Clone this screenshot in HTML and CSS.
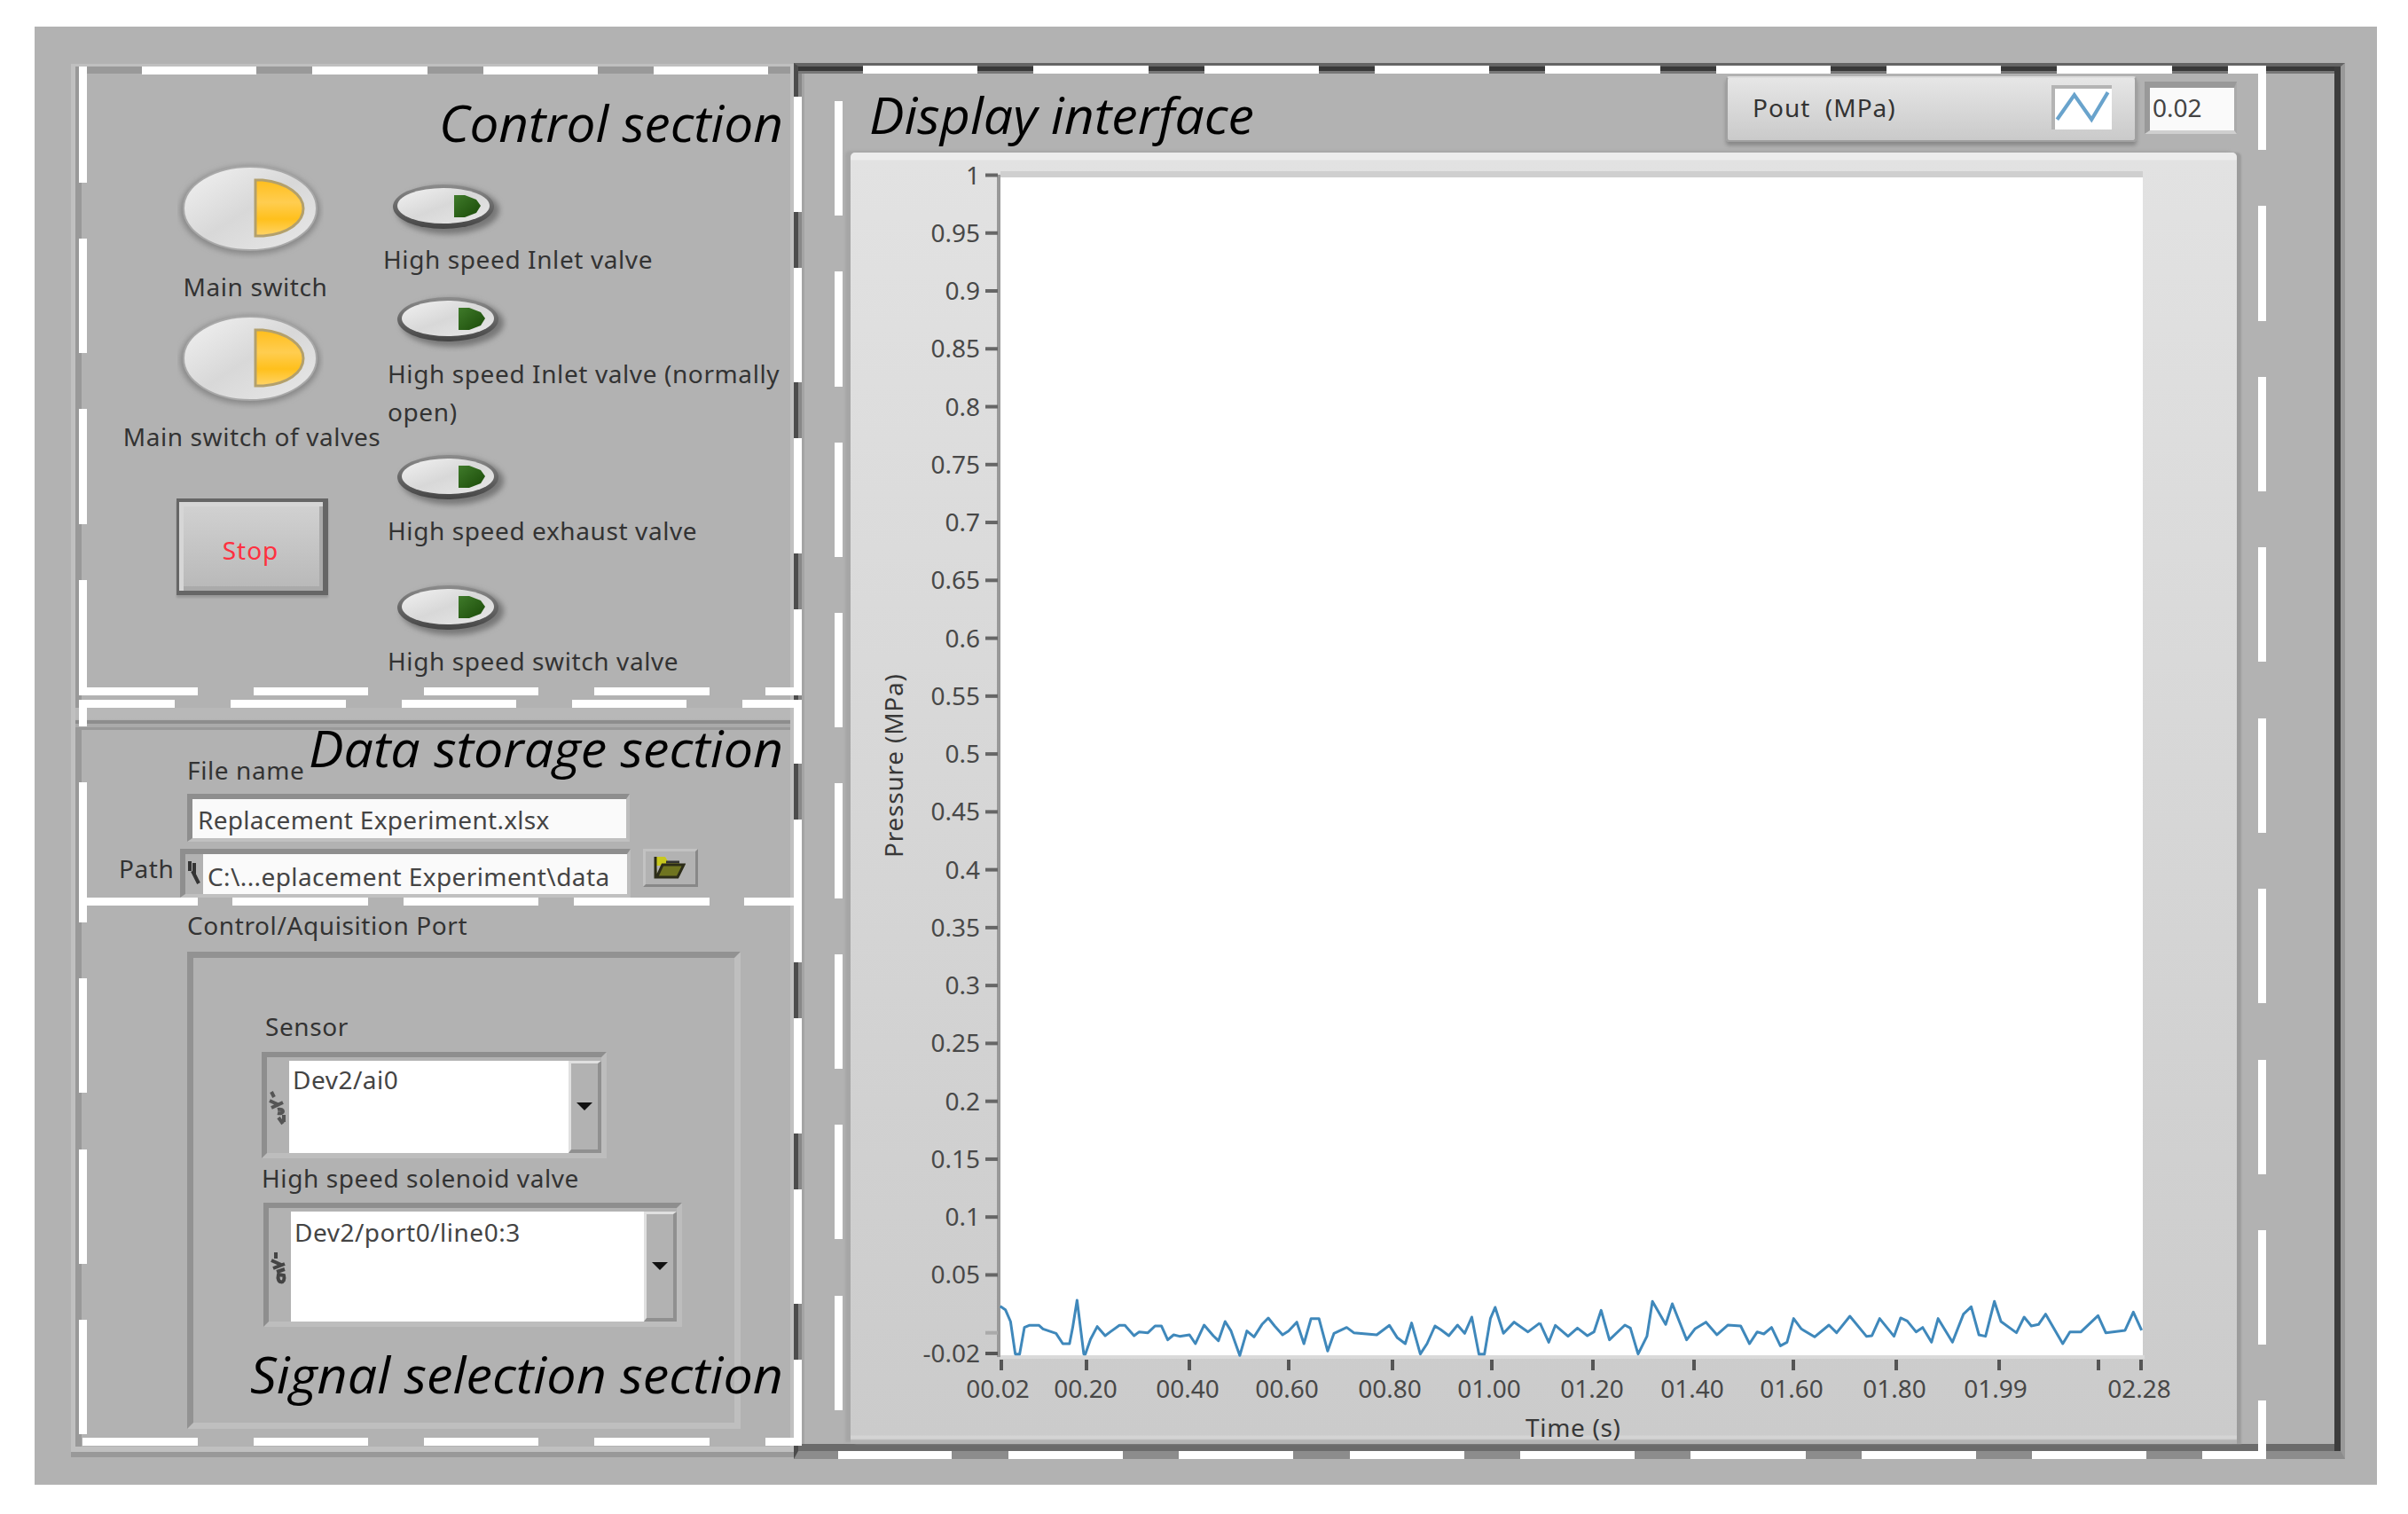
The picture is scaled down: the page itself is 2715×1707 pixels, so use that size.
FILE: index.html
```html
<!DOCTYPE html>
<html lang="en">
<head>
  <meta charset="UTF-8" />
  <title>Valve Control Panel</title>
  <link rel="stylesheet" href="styles.css">
</head>
<body>

  <svg class="defs" width="0" height="0">
    <defs>
      <linearGradient id="cap" x1="0" y1="0" x2="1" y2="1">
        <stop offset="0" stop-color="#f2f2f2"/>
        <stop offset=".5" stop-color="#d8d8d8"/>
        <stop offset="1" stop-color="#e8e8e8"/>
      </linearGradient>
      <linearGradient id="amber" x1="0" y1="0" x2="0" y2="1">
        <stop offset="0" stop-color="#ffbe1c"/>
        <stop offset=".4" stop-color="#ffcd50"/>
        <stop offset=".7" stop-color="#ffc01c"/>
        <stop offset="1" stop-color="#ffd468"/>
      </linearGradient>
      <linearGradient id="rim" x1="0" y1="0" x2="0" y2="1">
        <stop offset="0" stop-color="#8c8c8c"/>
        <stop offset="1" stop-color="#444"/>
      </linearGradient>
      <linearGradient id="green" x1="0" y1="0" x2="1" y2="1">
        <stop offset="0" stop-color="#3f7a2a"/>
        <stop offset="1" stop-color="#1a4a08"/>
      </linearGradient>
      <filter id="soft" x="-20%" y="-30%" width="140%" height="170%"><feGaussianBlur stdDeviation="3"/></filter>
    </defs>
    <symbol id="main-switch" viewBox="0 0 165 110">
      <ellipse cx="82" cy="55" rx="79" ry="50" fill="#888" filter="url(#soft)"/>
      <ellipse cx="82" cy="53" rx="75" ry="47" fill="url(#cap)" stroke="#a8a8a8" stroke-width="2"/>
      <path d="M88 21 H96 C124 24 142 38 142 53 C142 69 124 82 97 84 H88 Z" fill="url(#amber)" stroke="#b3a06c" stroke-width="3"/>
    </symbol>
    <symbol id="toggle" viewBox="0 0 130 66">
      <ellipse cx="66" cy="33" rx="58" ry="27" fill="#777" filter="url(#soft)"/>
      <ellipse cx="61" cy="29" rx="57" ry="25" fill="url(#rim)"/>
      <ellipse cx="61" cy="28" rx="52" ry="20" fill="url(#cap)"/>
      <path d="M73 16 H85 L98 21 L103 28 L98 36 L85 41 H73 Z" fill="url(#green)"/>
    </symbol>
  </svg>

  <div class="panel">
    <div class="left">

      <div class="control">
        <div class="switches">
          <svg class="main-switch"><use href="#main-switch"/></svg>
          <div class="label">Main switch</div>
          <svg class="main-switch second"><use href="#main-switch"/></svg>
          <div class="label of-valves">Main switch of valves</div>
          <button class="stop">Stop</button>
        </div>
        <div class="valves">
          <div class="valve first"><svg class="toggle"><use href="#toggle"/></svg><div class="label">High speed Inlet valve</div></div>
          <div class="valve"><svg class="toggle"><use href="#toggle"/></svg><div class="label two-lines">High speed Inlet valve (normally<br>open)</div></div>
          <div class="valve"><svg class="toggle"><use href="#toggle"/></svg><div class="label">High speed exhaust valve</div></div>
          <div class="valve"><svg class="toggle"><use href="#toggle"/></svg><div class="label">High speed switch valve</div></div>
        </div>
      </div>

      <div class="storage">
        <div class="label">File name</div>
        <div class="field file">Replacement Experiment.xlsx</div>
        <div class="path-row">
          <div class="label">Path</div>
          <div class="field path">
            <svg class="path-icon" viewBox="0 0 16 28"><path d="M3 1 V12 M8 3 V16 M6 12 L13 26" stroke="#333" stroke-width="4" fill="none"/></svg>
            <span>C:\...eplacement Experiment\data</span>
          </div>
          <div class="browse">
            <svg viewBox="0 0 36 28" width="36" height="28">
              <path d="M2 2 H13 L16 7 H29 V12 H2 Z" fill="#c8c81e"/>
              <path d="M2 2 V25 H27 L34 11 H10 L4 24" fill="#6f7420" stroke="#2c2c18" stroke-width="3"/>
              <path d="M14 8 H29" stroke="#333" stroke-width="3"/>
            </svg>
          </div>
        </div>
      </div>

      <div class="signal">
        <div class="label">Control/Aquisition Port</div>
        <div class="port">
          <div class="label sensor-label">Sensor</div>
          <div class="combo sensor">
            <svg class="io" viewBox="0 0 22 40"><path d="M5 2 L8 8 M3 12 L14 17 M5 20 L18 14 M12 22 C20 20 20 28 12 26 M13 31 L18 38 M19 28 V36" stroke="#555" stroke-width="4" fill="none"/></svg>
            <div class="value">Dev2/ai0</div>
            <div class="drop"><i></i></div>
          </div>
          <div class="label">High speed solenoid valve</div>
          <div class="combo solenoid">
            <svg class="io" viewBox="0 0 22 40"><path d="M8 2 V9 M3 11 L14 16 M5 20 L18 15 M9 24 L18 21 M11 27 C8 38 20 38 17 28 Z" stroke="#444" stroke-width="4" fill="none"/></svg>
            <div class="value">Dev2/port0/line0:3</div>
            <div class="drop"><i></i></div>
          </div>
        </div>
      </div>
    </div>

    <div class="display">
      <div class="legend-row">
        <div class="legend">
          <span>Pout&nbsp; (MPa)</span>
          <svg class="plot-icon" viewBox="0 0 60 45"><path d="M1 34 L20 7 L39 34 L57 4" fill="none" stroke="#69a3cc" stroke-width="4"/></svg>
        </div>
        <div class="readout">0.02</div>
      </div>
      <div class="graph">
        <svg id="chart" viewBox="959 172 1563 1456" width="1563" height="1456">
          <rect x="1128" y="193" width="1288" height="8" fill="#cfcfcf"/>
          <rect x="1128" y="200" width="1288" height="1328" fill="#fff"/>
          <rect x="1128" y="1528" width="1290" height="4" fill="#dadada"/>
          <rect x="1124" y="197" width="4" height="1333" fill="#999"/>
          <g id="ticks"></g>
          <g fill="none" stroke="#3f88bb" stroke-width="3" stroke-linejoin="round">
            <polyline vector-effect="non-scaling-stroke" transform="translate(1080 1380) scale(.4464 .3333)" points="107,278 120,290 133,330 145,440 156,440 168,350 180,343 205,343 215,355 248,370 265,405 282,405 290,350 301,258 318,440 322,440 335,390 352,347 372,378 385,365 408,343 422,343 445,378 458,365 480,368 498,345 514,345 530,392 545,375 560,380 585,375 600,405 622,342 645,378 658,395 675,330 690,362 712,445 730,362 748,382 768,340 784,318 800,345 820,375 835,362 856,332 874,405 892,320 912,320 934,430 950,370 982,350 1000,368 1058,375 1090,343 1110,385 1130,405 1146,335 1168,440 1185,405 1205,345 1220,358 1240,378 1262,342 1280,370 1298,315 1316,440 1330,440 1345,320 1357,282 1378,370 1405,332 1440,365 1470,335"/>
            <polyline vector-effect="non-scaling-stroke" transform="translate(1740 1380) scale(.6218 .3333)" points="-6,335 10,400 22,343 45,380 62,352 80,378 92,365 105,292 120,392 148,342 158,352 172,440 188,380 198,262 222,340 234,270 260,392 275,355 295,332 315,375 335,342 358,345 374,405 388,365 400,372 414,350 430,412 442,400 454,320 468,355 492,382 518,342 532,368 556,312 586,380 596,378 610,320 636,380 648,318 660,328 676,365 688,350 704,400 716,320 742,400 762,305 776,280 790,375 802,380 818,262 830,330 858,368 872,315 885,345 898,340 911,305 942,405 955,365 975,365 1006,310 1020,368 1055,360 1070,298 1085,360"/>
          </g>
          <text class="axis-title" x="1720" y="1620" textLength="107">Time (s)</text>
          <text class="axis-title" transform="translate(1018 967) rotate(-90)" textLength="207">Pressure (MPa)</text>
        </svg>
      </div>
    </div>
  </div>

  <!-- section outlines and captions over the panel -->
  <svg class="outlines" viewBox="0 0 2715 1707" width="2715" height="1707">
    <g fill="none" stroke="#fff" stroke-width="9">
      <path d="M160 79.5H289M352 79.5H482M545 79.5H674M737 79.5H866"/>
      <path d="M89 779.5H223M286 779.5H415M478 779.5H607M670 779.5H800M863 779.5H904"/>
      <path d="M93.5 75V206M93.5 269V398M93.5 461V591M93.5 654V784"/>
      <path d="M899.5 109V239M899.5 302V431M899.5 494V624M899.5 687V784"/>
      <path d="M89 793.5H197M260 793.5H390M453 793.5H582M645 793.5H774M837 793.5H904"/>
      <path d="M93.5 789V819M93.5 882V1040M93.5 1103V1232M93.5 1296V1425M93.5 1488V1617"/>
      <path d="M899.5 789V861M899.5 924V1085M899.5 1148V1278M899.5 1341V1470M899.5 1533V1630"/>
      <path d="M98 1016.5H223M262 1016.5H415M455 1016.5H607M647 1016.5H800M839 1016.5H895"/>
      <path d="M93 1625.5H223M286 1625.5H415M478 1625.5H607M670 1625.5H800M863 1625.5H904"/>
      <path d="M973 78.5H1102M1165 78.5H1295M1358 78.5H1487M1550 78.5H1679M1742 78.5H1872M1935 78.5H2064M2127 78.5H2256M2319 78.5H2449M2512 78.5H2555"/>
      <path d="M945 1640.5H1073M1137 1640.5H1266M1329 1640.5H1458M1522 1640.5H1651M1714 1640.5H1843M1906 1640.5H2036M2099 1640.5H2228M2291 1640.5H2420M2483 1640.5H2555"/>
      <path d="M945.5 114V243M945.5 306V436M945.5 499V628M945.5 691V820M945.5 883V1013M945.5 1076V1205M945.5 1268V1397M945.5 1461V1590"/>
      <path d="M2550.5 74V169M2550.5 232V362M2550.5 425V554M2550.5 617V746M2550.5 810V939M2550.5 1002V1131M2550.5 1195V1324M2550.5 1387V1516M2550.5 1579V1645"/>
    </g>
    <g class="caption">
      <text x="495" y="160" textLength="388" lengthAdjust="spacingAndGlyphs">Control section</text>
      <text x="348" y="865" textLength="535" lengthAdjust="spacingAndGlyphs">Data storage section</text>
      <text x="282" y="1571" textLength="601" lengthAdjust="spacingAndGlyphs">Signal selection section</text>
      <text x="980" y="151" textLength="434" lengthAdjust="spacingAndGlyphs">Display interface</text>
    </g>
  </svg>

  <script>
    const ticks = document.getElementById("ticks");
    let out = "";

    // pressure axis, 0.05 MPa per step
    for (let i = 0; i <= 20; i++) {
      const y = 197.5 + i * 65.26;
      out += `<rect x="1111" y="${y - 2}" width="14" height="4" fill="${i === 20 ? "#aaa" : "#666"}"/>`;
      if (i < 20) {
        const label = +(1 - i * 0.05).toFixed(2);
        out += `<text x="1105" y="${y + 10}" text-anchor="end">${label}</text>`;
      }
    }
    out += `<rect x="1111" y="1524" width="14" height="4" fill="#555"/>`;
    out += `<text x="1105" y="1536" text-anchor="end">-0.02</text>`;

    // time axis: position, label
    const times = [
      [1129, "00.02", 1125], [1225, "00.20", 1224], [1341, "00.40", 1339], [1453, "00.60", 1451],
      [1570, "00.80", 1567], [1682, "01.00", 1679], [1796, "01.20", 1795], [1910, "01.40", 1908],
      [2022, "01.60", 2020], [2138, "01.80", 2136], [2254, "01.99", 2250], [2366, "", 2366], [2414, "02.28", 2412]
    ];
    for (const [x, label, cx] of times) {
      out += `<rect x="${x - 2}" y="1533" width="4" height="12" fill="#555"/>`;
      out += `<text x="${cx}" y="1576" text-anchor="middle">${label}</text>`;
    }
    ticks.innerHTML = out;
  </script>

</body>
</html>
```

FILE: styles.css
```css
* {
  box-sizing: border-box;
}
body {
  position: relative;
  margin: 0;
  height: 1707px;
  padding: 30px 35px 0 39px;
  overflow: hidden;
  background: #fff;
  font-family: "Noto Sans", "Open Sans", sans-serif;
  font-size: 28px;
  line-height: 32px;
  color: #333;
}
.defs {
  position: absolute;
}
.panel {
  display: flex;
  height: 1644px;
  padding: 41px 36px 0 41px;
  background: #b2b2b2;
}
.label {
  white-space: nowrap;
  letter-spacing: 0.6px;
}

/* left column */
.left {
  width: 815px;
  height: 1565px;
  margin-top: 1px;
  border: solid #c0c0c0;
  border-width: 3px 4px 6px 5px;
  box-shadow: inset 7px 8px 0 #999, 0 6px 0 #999;
}
.control {
  display: flex;
  height: 723px;
}
.switches {
  display: flex;
  flex-direction: column;
  align-items: center;
  width: 290px;
  margin-left: 54px;
  padding-top: 107px;
}
.main-switch {
  width: 165px;
  height: 110px;
  margin-left: -4px;
}
.main-switch + .label {
  margin-top: 15px;
  margin-left: 8px;
}
.main-switch.second {
  margin-top: 12px;
}
.main-switch + .label.of-valves {
  margin-left: 0;
}
.stop {
  width: 171px;
  height: 109px;
  margin-top: 54px;
  padding-top: 8px;
  border: solid #666;
  border-width: 4px 6px 5px 3px;
  box-shadow: inset 5px 5px 0 #d6d6d6, inset -4px -5px 0 #aaa, 0 3px 2px #999;
  background: linear-gradient(#d2d2d2, #b8b8b8);
  color: #ff3040;
  font: inherit;
  letter-spacing: 1px;
}
.valves {
  display: grid;
  grid-template-rows: 127px 178px 147px auto;
  margin-left: 8px;
  padding-top: 129px;
}
.valve.first {
  margin-left: -5px;
}
.toggle {
  display: block;
  width: 130px;
  height: 66px;
  margin-left: 7px;
}
.valve .label {
  margin-top: 7px;
}
.valve.first .label {
  margin-top: 6px;
}
.valve .two-lines {
  margin-top: 3px;
  line-height: 43px;
}

/* file name and path */
.storage {
  height: 223px;
  padding-top: 28px;
  padding-left: 126px;
  background: linear-gradient(#b8b8b8 0 12px, #b2b2b2 14px, #8d8d8d 14px 18px, #aaa 18px 22px, #999 22px 25px, transparent 25px);
}
.storage > .label {
  margin-top: 26px;
}
.field {
  border: solid #8e8e8e;
  border-width: 6px 4px 4px 6px;
  border-right-color: #bdbdbd;
  border-bottom-color: #c0c0c0;
  background: #fafafa;
  white-space: nowrap;
  color: #444;
}
.field.file {
  width: 499px;
  height: 54px;
  margin-top: 11px;
  padding: 7px 6px;
  letter-spacing: 0.3px;
}
.path-row {
  display: flex;
  height: 55px;
  margin-top: 8px;
  margin-left: -77px;
}
.path-row .label {
  width: 69px;
  padding-top: 6px;
}
.field.path {
  display: flex;
  width: 508px;
  background: linear-gradient(90deg, #b2b2b2 20px, #fafafa 20px);
}
.field.path span {
  padding: 9px 0 0 7px;
  letter-spacing: 0.4px;
}
.path-icon {
  width: 16px;
  height: 28px;
  margin: 7px 0 0 2px;
}
.browse {
  width: 62px;
  height: 43px;
  margin-left: 14px;
  padding: 4px 0 0 9px;
  border: solid #c2c2c2;
  border-width: 3px;
  border-right-color: #888;
  border-bottom-color: #888;
}

/* control port */
.signal {
  padding: 6px 0 0 126px;
}
.port {
  width: 624px;
  height: 538px;
  margin-top: 14px;
  padding: 61px 0 0 77px;
  border: 7px solid #929292;
  border-right-color: #bfbfbf;
  border-bottom-color: #bfbfbf;
}
.sensor-label {
  padding-left: 4px;
}
.combo {
  display: flex;
  padding-top: 4px;
  border: 6px solid #8e8e8e;
  border-right-color: #bdbdbd;
  border-bottom-color: #bdbdbd;
}
.combo .io {
  width: 22px;
  height: 40px;
  margin: 33px 3px 0 0;
}
.combo .value {
  flex: 1;
  height: 100%;
  padding: 5px 4px;
  background: #fff;
  color: #444;
  letter-spacing: 0.5px;
}
.combo .drop {
  display: flex;
  align-items: center;
  justify-content: center;
  width: 37px;
  background: #b2b2b2;
  border: solid #e0e0e0;
  border-width: 3px 4px 4px 3px;
  border-right-color: #909090;
  border-bottom-color: #909090;
}
.combo .drop i {
  border: solid transparent;
  border-width: 9px 9px 0;
  border-top-color: #111;
}
.combo.sensor {
  width: 389px;
  height: 120px;
  margin: 13px 0 6px;
}
.combo.solenoid {
  width: 472px;
  height: 140px;
  margin: 12px 0 0 2px;
}
.combo.solenoid .io {
  margin-top: 44px;
}
.combo.solenoid .value {
  padding-top: 7px;
}

/* right column */
.display {
  width: 1749px;
  height: 1574px;
  border: solid #646464;
  border-width: 4px 5px 9px 5px;
  border-right-color: #999;
  border-bottom-color: #8c8c8c;
  border-left-color: #4c4c4c;
  padding: 11px 0 0 59px;
  box-shadow: inset -7px 0 0 #3c3c3c, inset 0 5px 0 #383838, inset 0 8px 0 #777, inset 0 -8px 0 #6b6b6b, inset 4px 0 0 #888, inset 7px 0 0 #a4a4a4;
}
.legend-row {
  display: flex;
  justify-content: flex-end;
  align-items: flex-start;
  height: 86px;
  padding-right: 117px;
}
.legend {
  display: flex;
  justify-content: space-between;
  align-items: center;
  width: 463px;
  height: 74px;
  padding: 0 26px 4px 28px;
  border: 2px solid #a0a0a0;
  border-top-color: #ddd;
  border-radius: 4px;
  background: linear-gradient(#e6e6e6, #cacaca);
  box-shadow: 0 4px 4px #888;
}
.legend span {
  letter-spacing: 1px;
}
.plot-icon {
  width: 68px;
  height: 50px;
  border: solid #b4b4b4;
  border-width: 4px 0 0 4px;
  background: #fff;
}
.readout {
  width: 104px;
  height: 59px;
  margin: 6px 0 0 9px;
  padding: 6px 3px;
  border: 6px solid #999;
  border-width: 7px 3px 4px 6px;
  border-right-color: #aaa;
  border-bottom-color: #cfcfcf;
  background: #fafafa;
  color: #444;
}
.graph {
  width: 1563px;
  height: 1456px;
  border-radius: 5px 5px 0 0;
  background: linear-gradient(#ececec 0 8px, #e2e2e2 9px, #cbcbcb 1446px, #d4d4d4 1447px 1450px, #b4b4b4 1452px);
  box-shadow: -6px -2px 3px #a6a6a6, 5px 0 2px #9c9c9c;
}
#chart {
  display: block;
}
#chart text {
  font-size: 28px;
  fill: #484848;
}
#chart .axis-title {
  fill: #383838;
}

.outlines {
  position: absolute;
  left: 0;
  top: 0;
}
.caption text {
  font-family: "Open Sans", sans-serif;
  font-style: italic;
  font-size: 57px;
  fill: #000;
}
```
